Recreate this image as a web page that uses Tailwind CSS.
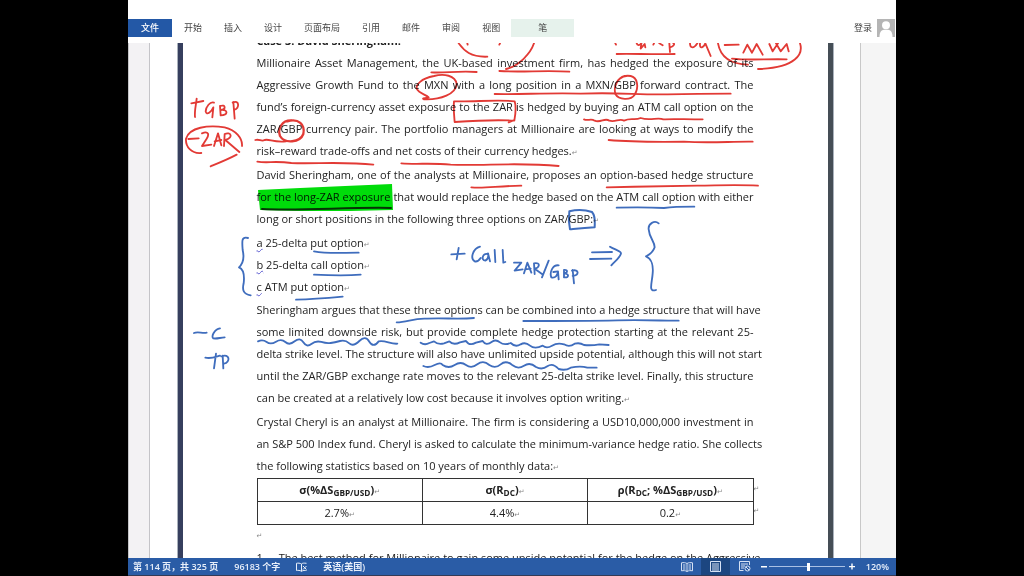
<!DOCTYPE html>
<html lang="zh-CN">
<head>
<meta charset="utf-8">
<meta name="viewport" content="width=device-width, initial-scale=1">
<title>Word</title>
<script src="https://cdn.jsdelivr.net/npm/@tailwindcss/browser@4"></script>
</head>
<body class="bg-black">
<div class="mx-auto flex h-screen w-3/4 flex-col bg-white font-['Open_Sans','Noto_Sans_CJK_SC',sans-serif] text-[#222]">

  <header class="flex shrink-0 items-center justify-between pt-[19px] pb-1.5 font-['Noto_Sans_CJK_SC',sans-serif] text-[9px] leading-[18px] text-[#444]">
    <nav class="flex items-center">
      <button class="mr-px bg-[#2358a6] px-[13px] font-medium text-white">文件</button>
      <button class="px-[11px]">开始</button>
      <button class="px-[11px]">插入</button>
      <button class="px-[11px]">设计</button>
      <button class="px-[11px]">页面布局</button>
      <button class="px-[11px]">引用</button>
      <button class="px-[11px]">邮件</button>
      <button class="px-[11px]">审阅</button>
      <button class="px-[11px]">视图</button>
      <button class="bg-[#e6f2ec] px-[27px]">笔</button>
    </nav>
    <div class="flex items-center gap-[5px]">
      <button>登录</button>
      <svg class="h-[18px] w-[19px]" viewBox="0 0 19 18"><path fill="#b5b5b5" d="M0 0h18v18H0z"/><circle cx="9" cy="6.300" r="4" fill="#fff"/><path fill="#fff" d="M2.500 18c0-5 2-7 4.500-7.200h4c2.500.2 4.500 2.200 4.500 7.200z"/></svg>
    </div>
  </header>

  <main class="relative flex min-h-0 flex-1 overflow-hidden">
    <div class="w-[22px] shrink-0 border-x border-[#c4c4c8] bg-[#f3f2f4]"></div>
    <div class="flex-1"></div>
    <article class="w-[655px] shrink-0 border-r-[5px] border-l-[5px] border-r-[#454e56] border-l-[#363f5e] bg-white pr-[72px] pl-[74px] text-[11px] leading-[22px] outline outline-[#aab2bc]">
      <div class="-mt-[13px] w-[497px] whitespace-nowrap">
        <h1 class="font-bold">Case 3: David Sheringham.</h1>
        <p class="mb-0.5">
          <span class="block [text-align-last:justify]">Millionaire Asset Management, the UK-based investment firm, has hedged the exposure of its</span>
          <span class="block [text-align-last:justify]">Aggressive Growth Fund to the MXN with a long position in a MXN/GBP forward contract. The</span>
          <span class="block [text-align-last:justify]">fund’s foreign-currency asset exposure to the ZAR is hedged by buying an ATM call option on the</span>
          <span class="block [text-align-last:justify]">ZAR/GBP currency pair. The portfolio managers at Millionaire are looking at ways to modify the</span>
          <span class="block">risk–reward trade-offs and net costs of their currency hedges.<span class="font-['DejaVu_Sans'] text-[7px] leading-0 text-[#888]">↵</span></span>
        </p>
        <p class="mb-0.5">
          <span class="block [text-align-last:justify]">David Sheringham, one of the analysts at Millionaire, proposes an option-based hedge structure</span>
          <span class="block [text-align-last:justify]">for the long-ZAR exposure that would replace the hedge based on the ATM call option with either</span>
          <span class="block">long or short positions in the following three options on ZAR/GBP:<span class="font-['DejaVu_Sans'] text-[7px] leading-0 text-[#888]">↵</span></span>
        </p>
        <p><span class="underline decoration-[#5b5bd0] decoration-wavy decoration-1">a</span> 25-delta put option<span class="font-['DejaVu_Sans'] text-[7px] leading-0 text-[#888]">↵</span></p>
        <p><span class="underline decoration-[#5b5bd0] decoration-wavy decoration-1">b</span> 25-delta call option<span class="font-['DejaVu_Sans'] text-[7px] leading-0 text-[#888]">↵</span></p>
        <p class="mb-px"><span class="underline decoration-[#5b5bd0] decoration-wavy decoration-1">c</span> ATM put option<span class="font-['DejaVu_Sans'] text-[7px] leading-0 text-[#888]">↵</span></p>
        <p class="mb-0.5">
          <span class="block [text-align-last:justify]">Sheringham argues that these three options can be combined into a hedge structure that will have</span>
          <span class="block [text-align-last:justify]">some limited downside risk, but provide complete hedge protection starting at the relevant 25-</span>
          <span class="block [text-align-last:justify]">delta strike level. The structure will also have unlimited upside potential, although this will not start</span>
          <span class="block [text-align-last:justify]">until the ZAR/GBP exchange rate moves to the relevant 25-delta strike level. Finally, this structure</span>
          <span class="block">can be created at a relatively low cost because it involves option writing.<span class="font-['DejaVu_Sans'] text-[7px] leading-0 text-[#888]">↵</span></span>
        </p>
        <p class="mb-px">
          <span class="block [text-align-last:justify]">Crystal Cheryl is an analyst at Millionaire. The firm is considering a USD10,000,000 investment in</span>
          <span class="block [text-align-last:justify]">an S&amp;P 500 Index fund. Cheryl is asked to calculate the minimum-variance hedge ratio. She collects</span>
          <span class="block">the following statistics based on 10 years of monthly data:<span class="font-['DejaVu_Sans'] text-[7px] leading-0 text-[#888]">↵</span></span>
        </p>
        <div class="flex">
          <table class="w-full shrink-0 table-fixed border-collapse text-center">
            <thead>
              <tr>
                <th class="border border-[#333] p-0">σ(%ΔS<sub>GBP/USD</sub>)<span class="font-['DejaVu_Sans'] text-[7px] leading-0 font-normal text-[#888]">↵</span></th>
                <th class="border border-[#333] p-0">σ(R<sub>DC</sub>)<span class="font-['DejaVu_Sans'] text-[7px] leading-0 font-normal text-[#888]">↵</span></th>
                <th class="border border-[#333] p-0">ρ(R<sub>DC</sub>; %ΔS<sub>GBP/USD</sub>)<span class="font-['DejaVu_Sans'] text-[7px] leading-0 font-normal text-[#888]">↵</span></th>
              </tr>
            </thead>
            <tbody>
              <tr>
                <td class="border border-[#333] p-0">2.7%<span class="font-['DejaVu_Sans'] text-[7px] leading-0 text-[#888]">↵</span></td>
                <td class="border border-[#333] p-0">4.4%<span class="font-['DejaVu_Sans'] text-[7px] leading-0 text-[#888]">↵</span></td>
                <td class="border border-[#333] p-0">0.2<span class="font-['DejaVu_Sans'] text-[7px] leading-0 text-[#888]">↵</span></td>
              </tr>
            </tbody>
          </table>
          <div class="font-['DejaVu_Sans'] text-[7px] text-[#888]"><div>↵</div><div>↵</div></div>
        </div>
        <p class="font-['DejaVu_Sans'] text-[7px] text-[#888]">↵</p>
        <p class="flex gap-[13px]"><span>1.</span><span class="flex-1 [text-align-last:justify]">The best method for Millionaire to gain some upside potential for the hedge on the Aggressive</span></p>
      </div>
    </article>
    <div class="flex-1"></div>
    <div class="w-9 shrink-0 border-l border-[#c8c8c8] bg-[#f5f5f5]"></div>

    <!-- pen annotations -->
    <svg class="pointer-events-none absolute top-0 left-0 h-[515px] w-[768px] mix-blend-multiply" viewBox="128 43 768 515" fill="none" stroke-linecap="round" stroke-linejoin="round">
      <path fill="#00dc0a" d="M258 190L300 188 345 186 392 184 393 210 350 211 300 211 260 210Z"/>
      <path stroke="#063306" stroke-width="2" d="M262 209C300 211 350 207 391 208"/>
      <g stroke="#e23a35" stroke-width="5.500">
        <g transform="translate(128 0) scale(.33333)">
          <path d="M206 296C204 316 199 334 201 351M190 310L226 303M258 308C246 304 234 320 233 334 236 348 250 336 256 322L253 352M276 318L278 346M276 318C294 312 294 328 279 330 302 328 300 346 278 346M316 306L320 356M314 308C334 298 336 324 318 330"/>
          <path d="M220 459C190 462 172 440 174 416 184 382 240 374 290 382 324 390 344 416 342 438M181 417L212 415M222 400C242 392 244 404 236 416L222 438 250 434M258 438L270 400 280 436M260 424L280 420M288 438L290 402C308 394 318 412 292 420L334 456M326 464C300 478 270 490 248 499"/>
          <path d="M382 420C394 416 400 426 410 420 424 416 436 428 474 424"/>
          <path stroke-width="7" d="M490 361C462 360 448 386 456 408 470 432 516 428 526 402 532 374 512 354 478 364"/>
          <path d="M388 485C420 490 440 482 490 489 560 492 650 484 736 494"/>
        </g>
        <g transform="translate(384 0) scale(.33333)">
          <path d="M224 130C240 152 260 172 310 170M250 130L251 134M348 130L346 134M450 130C440 160 405 198 366 207"/>
          <path d="M142 217C180 220 220 212 278 216M346 213C410 218 480 210 556 215"/>
          <path d="M134 292C110 296 118 296 120 298 170 300 216 282 218 252 214 226 180 220 150 228 110 236 96 254 98 266 104 280 126 284 134 292"/>
          <path d="M332 282C400 284 500 278 590 281 700 276 760 285 850 283S980 281 1040 281"/>
          <path d="M722 228C700 234 688 260 694 282 704 300 740 302 752 284 766 260 760 232 740 228 728 226 714 230 708 236"/>
          <path d="M210 304C270 306 340 298 392 304 398 324 394 346 391 362 330 358 270 362 212 366 210 344 208 324 210 304M374 367L391 360"/>
          <path d="M600 358C612 364 620 354 632 362 650 370 662 352 676 362 694 368 706 354 720 362 740 352 752 362 770 354 800 364 820 350 838 358 860 356 900 358 956 358"/>
          <path d="M674 420C740 426 820 426 900 425 980 430 1040 424 1106 425"/>
          <path d="M52 490C100 494 140 488 200 494 300 498 400 486 524 498"/>
          <path d="M262 562C300 566 340 558 412 557M668 562C760 560 860 558 940 557S1060 554 1122 557"/>
          <path d="M694 130L696 134M758 130C760 138 768 136 772 130M698 162C740 160 800 164 872 162"/>
        </g>
        <g transform="translate(640 0) scale(.33333)">
          <path d="M4 130L2 146 14 132 16 142M42 130L40 134M58 130L68 136M88 130L90 156M90 142C104 138 104 130 100 130M150 130C150 146 162 146 172 130M180 130C178 150 192 142 196 130L212 168M234 130C240 164 264 192 324 194M480 130C490 160 470 204 354 207M254 135L296 134M310 158L322 134 336 158 350 132 368 164M388 132L398 154 414 130M408 130L422 154 440 132 446 154M276 176C330 182 380 176 440 178"/>
        </g>
      </g>
      <g stroke="#3f6dbd" stroke-width="5.500">
        <g transform="translate(128 140) scale(.33333)">
          <path d="M360 294C340 288 342 304 344 330 350 356 346 370 333 382 348 388 350 404 347 430 342 450 346 462 368 466M558 334C600 342 640 338 692 338M558 404C600 406 650 408 698 404M504 479C550 478 600 474 644 470"/>
        </g>
        <g transform="translate(384 140) scale(.33333)">
          <path d="M202 343L242 341M224 324L218 358M288 320C266 326 258 356 272 364 280 366 286 360 290 354M310 342C296 338 290 362 304 362 312 358 314 348 312 340L318 364M332 330L334 366M356 330L358 368 364 366M390 368L412 368 392 392 416 388M420 400L430 368 442 398M424 388L440 386M452 402L450 370C472 366 466 384 452 386L474 402M494 362L474 412M524 376C506 374 496 396 502 412 514 416 522 404 522 394L508 396M522 394L524 418M540 390L540 412M540 390C554 388 550 400 540 400 558 402 554 414 540 412M566 390L570 430M564 392C586 386 586 406 566 408M624 337L684 336M618 357L682 356M678 320C694 330 710 332 711 340 708 354 692 364 682 376"/>
          <path stroke-width="6" d="M556 214C580 208 600 208 624 216 636 230 632 248 632 262 600 264 580 266 558 268 554 250 554 230 556 214"/>
          <path d="M698 203C740 202 800 202 840 204 870 200 900 200 931 200"/>
        </g>
        <g transform="translate(640 140) scale(.33333)">
          <path d="M56 250C44 240 24 250 26 268 28 294 44 304 44 322 38 340 28 344 18 349 36 356 40 380 38 400 36 430 24 458 48 450"/>
        </g>
        <g transform="translate(128 285) scale(.33333)">
          <path d="M198 144C210 138 222 146 236 143M276 130C260 132 248 156 256 160 266 162 276 158 290 157M232 218C250 222 262 216 276 212M264 206L258 250M284 212L286 250M280 214C306 204 308 232 288 236"/>
          <path d="M390 169Q404 162 416 171T444 170 472 171 500 169 526 172 550 177 580 171 608 174 636 168 664 175 694 168 724 170 752 169C770 164 788 178 808 176"/>
        </g>
        <g transform="translate(384 285) scale(.33333)">
          <path d="M38 112C70 112 90 98 130 101 180 98 220 104 270 99M418 108C500 108 600 108 700 106S840 108 884 107"/>
          <path d="M110 173Q122 182 136 174L150 169Q162 180 180 175L196 169Q208 182 228 172L246 168Q256 184 276 173L296 168Q306 184 324 170Q336 162 348 172T380 174Q394 188 410 178Q424 170 438 182T476 182Q488 192 504 182T540 178Q556 188 572 176Q588 172 600 180Q624 182 646 178L674 180M118 243Q134 250 152 240T176 240Q194 252 212 240T246 240Q262 252 280 238T316 240Q334 252 350 238T386 241Q402 254 420 242T456 246Q474 256 490 244T524 252Q544 258 560 248 590 242 610 248L638 248"/>
        </g>
      </g>
    </svg>
  </main>

  <footer class="flex shrink-0 items-center justify-between border-b border-[#333a55] bg-[#2a5ca6] pr-[7px] pl-[5px] font-['Open_Sans','Noto_Sans_CJK_SC',sans-serif] text-[9px] leading-[17px] font-semibold text-[#e8effa]">
    <div class="flex items-center gap-4">
      <span>第 114 页，共 325 页</span>
      <span>96183 个字</span>
      <svg class="h-[10px] w-[11px]" viewBox="0 0 11 10" fill="none" stroke="#e8effa"><path d="M5.500 2C4 1 2 1 .5 1.300V8.500C2 8.200 4 8.300 5.500 9.300V2C6.500 1 8 1 10.500 1.300M7 4l3.500 3.500M10.500 4L7 7.500M5.500 9.300C7 8.300 9 8.300 10.500 8.500"/></svg>
      <span>英语(美国)</span>
    </div>
    <div class="flex items-center">
      <button aria-label="阅读视图" class="px-2"><svg class="h-[10px] w-[12px]" viewBox="0 0 12 10" fill="none" stroke="#d5e1f4"><path d="M6 1.500C4.500.5 2.500.5.5.8v8c2-.3 4-.3 5.500.7 1.500-1 3.500-1 5.500-.7v-8C9.500.5 7.500.5 6 1.500v8M2 3h2.500M2 5h2.500M2 7h2.500M7.500 3H10M7.500 5H10M7.500 7H10"/></svg></button>
      <button aria-label="页面视图" class="bg-[#1c4680] px-[9px] py-[3px]"><svg class="h-[11px] w-[11px]" viewBox="0 0 11 11" fill="none" stroke="#d5e1f4"><path d="M.5.5h10v10H.5zM2 3h7M2 5h7M2 7h7M2 9h7"/></svg></button>
      <button aria-label="Web 视图" class="px-[9px]"><svg class="h-[11px] w-[12px]" viewBox="0 0 12 11" fill="none" stroke="#d5e1f4"><path d="M10.500 4V.5H.5v9h4M2 3h7M2 5h4M2 7h3"/><circle cx="8.500" cy="7.500" r="2.500"/><path d="M7 6l3 3"/></svg></button>
      <button aria-label="缩小" class="ml-px"><svg class="h-[7px] w-[6px]" viewBox="0 0 6 7"><path fill="#fff" d="M0 3h6v1.500H0z"/></svg></button>
      <input type="range" aria-label="缩放" min="0" max="100" value="53" class="mx-0.5 h-[9px] w-[76px] appearance-none bg-[linear-gradient(#a9c0e4,#a9c0e4)] bg-[length:100%_1px] bg-center bg-no-repeat [&::-webkit-slider-thumb]:h-[8px] [&::-webkit-slider-thumb]:w-[3px] [&::-webkit-slider-thumb]:appearance-none [&::-webkit-slider-thumb]:bg-white">
      <button aria-label="放大" class="mr-[11px] ml-0.5"><svg class="h-[7px] w-[6px]" viewBox="0 0 6 7"><path fill="#fff" d="M0 3h6v1.300H0zM2.300.500h1.400v6H2.300z"/></svg></button>
      <button>120%</button>
    </div>
  </footer>
</div>
</body>
</html>
